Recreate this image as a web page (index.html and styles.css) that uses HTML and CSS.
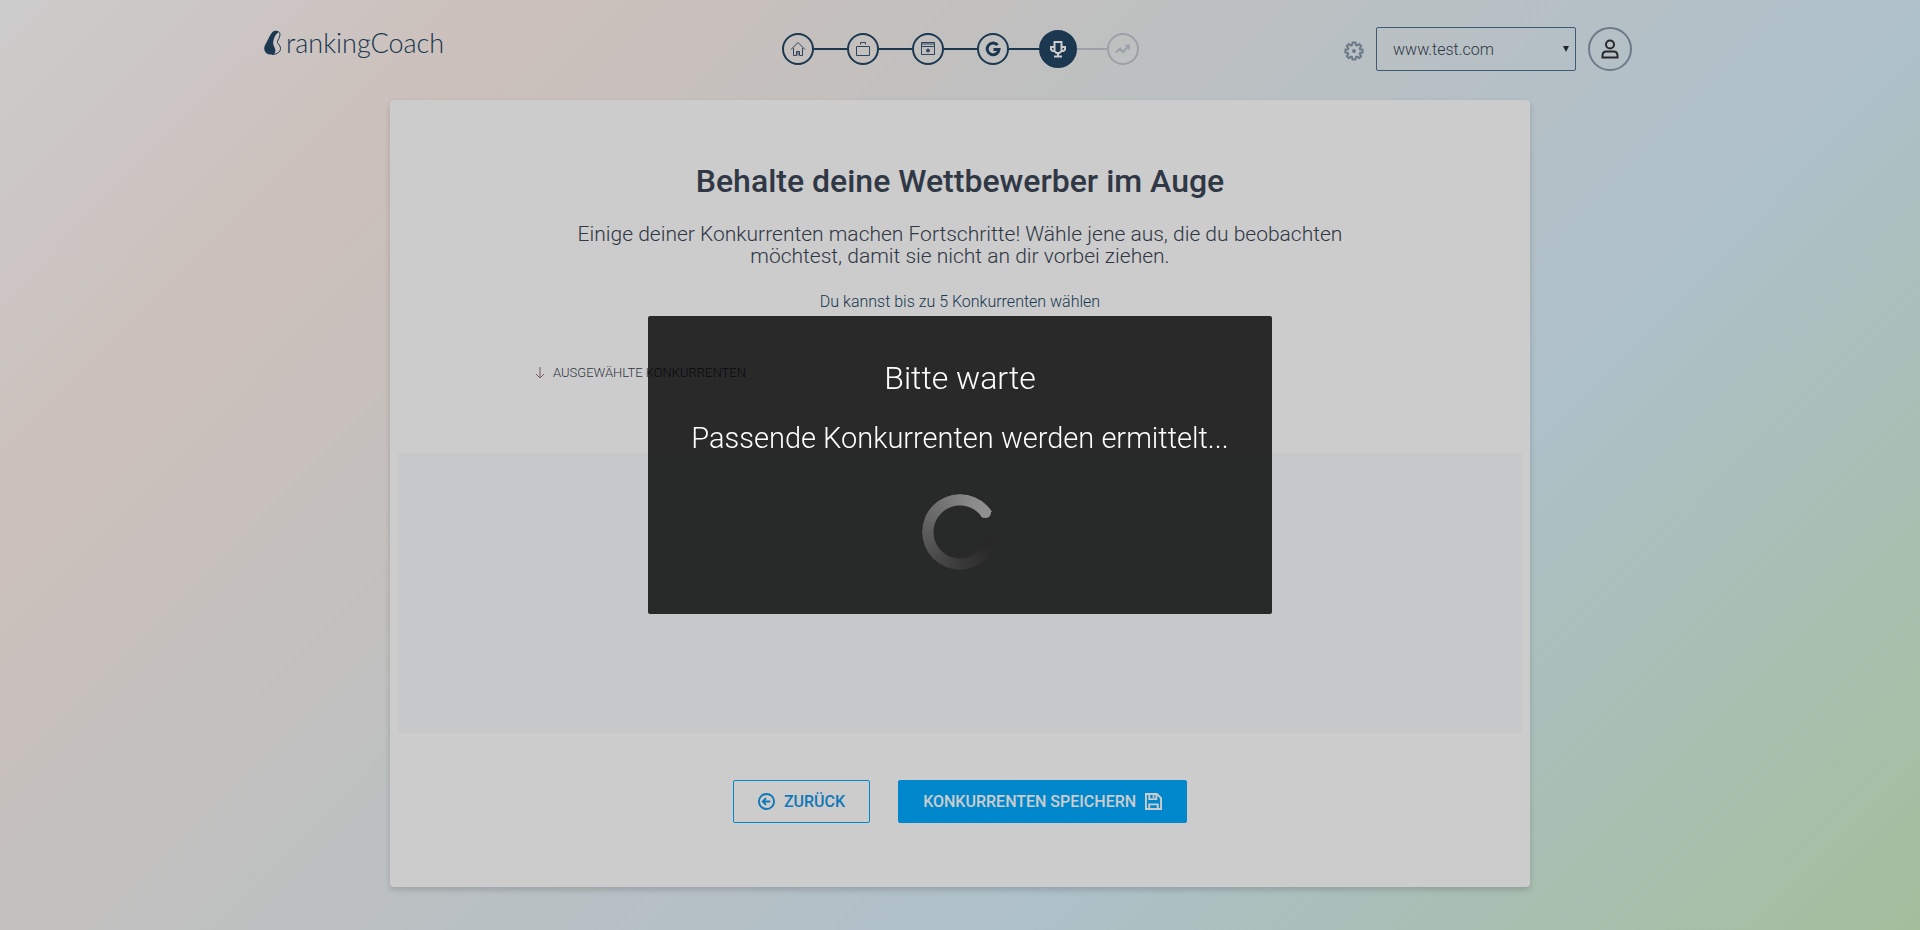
FILE: index.html
```html
<!DOCTYPE html>
<html lang="de">
<head>
<meta charset="utf-8">
<title>rankingCoach</title>
<link rel="stylesheet" href="styles.css">
</head>
<body>
<header class="header">
  <a class="logo" href="#" aria-label="rankingCoach">
    <svg class="logo-mark" viewBox="0 0 18 26" aria-hidden="true">
      <path fill="#234666" d="M9 1.500C6 4 5 8 3 11.500C.8 15.500 0 17 .3 19.500C.8 23 4 25 8 24.500C11 24.300 12 22 11 18.500C10.200 16 8.800 15 9.300 11.500C9.800 7.500 11.500 4.500 14.500 2C13.500 .6 10.800 .3 9 1.500Z"/>
      <path fill="none" stroke="#234666" stroke-width="1" d="M12.500 1.300C16 1.500 16.500 4 15.500 7C14.800 9.500 13 10.500 13.500 12.500C14 14.500 16.500 15 16.500 18.500C16.500 22 13 24.500 8 24.500"/>
    </svg>
    <span class="logo-text">rankingCoach</span>
  </a>
  <nav class="steps" aria-label="Fortschritt">
    <a class="step" href="#" aria-label="Start"><svg viewBox="0 0 16 16"><path d="M1 8.500 8 1.500l7 7M3.500 7v7.500h3v-4h3v4h3V7"/><path d="M8 10.500v4"/></svg></a>
    <a class="step" href="#" aria-label="Unternehmen"><svg viewBox="0 0 16 16"><path d="M1.500 5.500h13v9h-13zM5.500 3.500v-2h5v2"/></svg></a>
    <a class="step" href="#" aria-label="Website"><svg viewBox="0 0 16 16"><path d="M1.500 1.500h13v12h-13zM1.500 5.500h13M1.500 3h13"/><circle cx="8" cy="9.500" r="1.500" fill="currentColor"/></svg></a>
    <a class="step" href="#" aria-label="Google"><svg class="step-google" viewBox="0 0 16 16"><path d="M12.600 4A5.900 5.900 0 1 0 14 8.500H8.500"/></svg></a>
    <a class="step step-active" href="#" aria-current="step" aria-label="Konkurrenten"><svg viewBox="0 0 18 18"><path d="M5.500 2h7v9l-2 2h-3l-2-2zM5.500 7H2v2.500L3.500 11h2M12.500 7H16v2.500L14.500 11h-2M9 13v3M5 16.500h8"/></svg></a>
    <a class="step step-next" href="#" aria-label="Rankings"><svg viewBox="0 0 16 16"><path d="m1 11.500 4-4 3 3.500 6-6.500M10 4.500h4v4"/></svg></a>
  </nav>
  <div class="account">
    <button class="settings" type="button" aria-label="Einstellungen">
      <svg viewBox="0 0 20 20"><path d="M8.500 1.500h3l.5 2.600 1 .4 2.200-1.500 2 2.100-1.500 2.200.4 1 2.500.4v2.700l-2.500.5-.4 1 1.500 2.200-2 2.100-2.200-1.500-1 .4-.5 2.500h-3L8 16.100l-1-.4-2.200 1.500-2-2.100 1.500-2.200-.4-1-2.500-.5V8.700l2.500-.4.4-1-1.500-2.200 2-2.100L7 4.500l1-.4z"/><circle cx="10" cy="10" r="1" fill="currentColor"/></svg>
    </button>
    <div class="site">
      <select class="site-select" aria-label="Website"><option>www.test.com</option></select>
      <span class="site-arrow" aria-hidden="true"></span>
    </div>
    <button class="avatar" type="button" aria-label="Benutzerkonto">
      <svg viewBox="0 0 20 20"><circle cx="10" cy="5.500" r="4"/><path d="M2.500 18.500v-1.800c0-2.500 1.500-4.200 4-4.200h7c2.500 0 4 1.700 4 4.200v1.800z"/></svg>
    </button>
  </div>
</header>

<main class="card">
  <h1 class="title">Behalte deine Wettbewerber im Auge</h1>
  <p class="lead">Einige deiner Konkurrenten machen Fortschritte! Wähle jene aus, die du beobachten möchtest, damit sie nicht an dir vorbei ziehen.</p>
  <p class="hint">Du kannst bis zu 5 Konkurrenten wählen</p>
  <h2 class="selected">
    <svg viewBox="0 0 10 12" aria-hidden="true"><path d="M5 0v11M1 7l4 4 4-4"/></svg>
    Ausgewählte Konkurrenten
  </h2>
  <section class="panel" aria-label="Konkurrenten"></section>
  <div class="actions">
    <button class="button button-outline" type="button">
      <svg viewBox="0 0 18 18" aria-hidden="true"><circle cx="9" cy="9" r="8"/><path d="M13 9H5.500M8.500 5.500 5 9l3.500 3.500"/></svg>
      Zurück
    </button>
    <button class="button button-solid" type="button">
      Konkurrenten speichern
      <svg viewBox="0 0 18 18" aria-hidden="true"><path d="M1 1h11.500L17 5.500V17H1zM4.500 1v5.500H12V1M9 2.500v2.500M4.500 17v-5h9v5"/></svg>
    </button>
  </div>
</main>

<div class="overlay">
  <div class="dialog" role="dialog" aria-modal="true" aria-labelledby="wait-title">
    <h2 class="dialog-title" id="wait-title">Bitte warte</h2>
    <p class="dialog-text">Passende Konkurrenten werden ermittelt...</p>
    <div class="spinner"><span class="spinner-ring"></span><span class="spinner-cap"></span></div>
  </div>
</div>
</body>
</html>
```
FILE: styles.css
```css
* {
  box-sizing: border-box;
}

body {
  margin: 0;
  min-height: 100vh;
  font-family: Roboto, "Liberation Sans", sans-serif;
  font-weight: 300;
  color: #3b4656;
  background: linear-gradient(135deg, #ffffff 0%, #fff0ea 19%, #f0f1f0 38%, #daf0fc 68%, #cdeec4 100%);
}

svg {
  fill: none;
  stroke: currentColor;
}

button {
  font: inherit;
  padding: 0;
  background: none;
  cursor: pointer;
}

.header {
  display: grid;
  grid-template-columns: 1fr auto 1fr;
  align-items: center;
  max-width: 1392px;
  height: 100px;
  margin: 0 auto;
}

.logo {
  display: flex;
  align-items: center;
  gap: 4px;
  padding-bottom: 14px;
  color: #234666;
  text-decoration: none;
}

.logo-mark {
  width: 18px;
  height: 26px;
  stroke: none;
}

.logo-text {
  font-family: Lato, sans-serif;
  font-size: 27px;
  line-height: 32px;
  font-weight: 300;
}

.steps {
  display: flex;
  align-items: center;
  padding-bottom: 2px;
  color: #234666;
}

.step {
  display: flex;
  align-items: center;
  justify-content: center;
  width: 32px;
  height: 32px;
  border: 2px solid #234666;
  border-radius: 50%;
  color: #3a5573;
}

.step + .step {
  position: relative;
  margin-left: 33px;
}

.step + .step::before {
  content: "";
  position: absolute;
  right: 100%;
  width: 33px;
  margin-right: 2px;
  border-top: 2px solid #234666;
}

.step svg {
  width: 16px;
  height: 16px;
}

.step .step-google {
  color: #234666;
  stroke-width: 3;
}

.step.step-active {
  width: 38px;
  height: 38px;
  margin-left: 30px;
  color: #ffffff;
  background: #234666;
}

.step-active svg {
  width: 18px;
  height: 18px;
  stroke-width: 2;
}

.step.step-active::before {
  width: 30px;
}

.step.step-next {
  margin-left: 30px;
  color: #c3c9d1;
  border-color: #c3c9d1;
}

.step-next svg {
  stroke-width: 2;
}

.step.step-next::before {
  width: 30px;
  border-color: #c3c9d1;
}

.account {
  display: flex;
  align-items: center;
  justify-content: flex-end;
  gap: 12px;
  padding: 0 24px 2px 0;
}

.settings {
  display: flex;
  padding-top: 4px;
  border: 0;
  color: #8798ac;
}

.settings svg {
  width: 20px;
  height: 20px;
  stroke-width: 2;
}

.site {
  display: flex;
  align-items: center;
  position: relative;
  width: 200px;
}

.site-select {
  appearance: none;
  width: 100%;
  height: 44px;
  padding: 0 16px;
  border: 1px solid #4f7192;
  border-radius: 2px;
  background: transparent;
  font: inherit;
  font-size: 16px;
  color: #3b4656;
}

.site-arrow {
  position: absolute;
  right: 7px;
  border: 3px solid transparent;
  border-top: 6px solid #2b2f33;
  border-bottom: 0;
  pointer-events: none;
}

.avatar {
  display: flex;
  align-items: center;
  justify-content: center;
  width: 44px;
  height: 44px;
  border: 2px solid #8798ac;
  border-radius: 50%;
  color: #333333;
}

.avatar svg {
  width: 20px;
  height: 20px;
  stroke-width: 2;
}

.card {
  max-width: 1140px;
  margin: 0 auto;
  padding: 60px 8px 64px;
  border-radius: 4px;
  background: #ffffff;
  box-shadow: 0 3px 6px rgba(0, 0, 0, 0.16);
  text-align: center;
}

.title {
  margin: 0;
  font-size: 32px;
  line-height: 42px;
  font-weight: 500;
}

.lead {
  max-width: 780px;
  margin: 21px auto 0;
  font-size: 21px;
  line-height: 22px;
}

.hint {
  margin: 25px 0 0;
  font-size: 16px;
  line-height: 20px;
  color: #234666;
}

.selected {
  display: flex;
  align-items: center;
  gap: 8px;
  margin: 52px 0 0;
  padding-left: 137px;
  font-size: 13px;
  line-height: 18px;
  font-weight: 300;
  text-transform: uppercase;
}

.selected svg {
  width: 10px;
  height: 12px;
  color: #96707a;
}

.panel {
  height: 280px;
  margin-top: 71px;
  background: #f9fbfd;
}

.actions {
  display: flex;
  justify-content: center;
  gap: 28px;
  margin-top: 47px;
}

.button {
  display: flex;
  align-items: center;
  gap: 9px;
  height: 43px;
  padding: 0 24px;
  border: 1px solid #00a9ff;
  border-radius: 2px;
  font-size: 16px;
  font-weight: 500;
  text-transform: uppercase;
}

.button svg {
  width: 17px;
  height: 17px;
  stroke-width: 2;
}

.button-outline {
  color: #1496e8;
}

.button-solid {
  color: #ffffff;
  background: #00a9ff;
}

.overlay {
  position: fixed;
  inset: 0;
  display: flex;
  align-items: center;
  justify-content: center;
  background: rgba(0, 0, 0, 0.2);
}

.dialog {
  display: flex;
  flex-direction: column;
  align-items: center;
  padding: 41px 43px 44px;
  border-radius: 2px;
  background: rgba(0, 0, 0, 0.8);
  color: #ffffff;
  text-align: center;
}

.dialog-title {
  margin: 0;
  font-size: 32px;
  line-height: 42px;
  font-weight: 300;
}

.dialog-text {
  margin: 20px 0 0;
  font-size: 29px;
  line-height: 38px;
}

.spinner {
  position: relative;
  width: 76px;
  height: 76px;
  margin-top: 37px;
}

.spinner-ring {
  position: absolute;
  inset: 0;
  border-radius: 50%;
  background: conic-gradient(from 58deg, transparent 0deg 35deg, #282828 60deg, #3c3c3c 130deg, #8c8c8c 330deg, #909090 360deg);
  mask: radial-gradient(circle, transparent 26px, #000000 27px);
}

.spinner-cap {
  position: absolute;
  top: 13px;
  left: 58px;
  width: 11px;
  height: 11px;
  border-radius: 50%;
  background: #909090;
}
```
